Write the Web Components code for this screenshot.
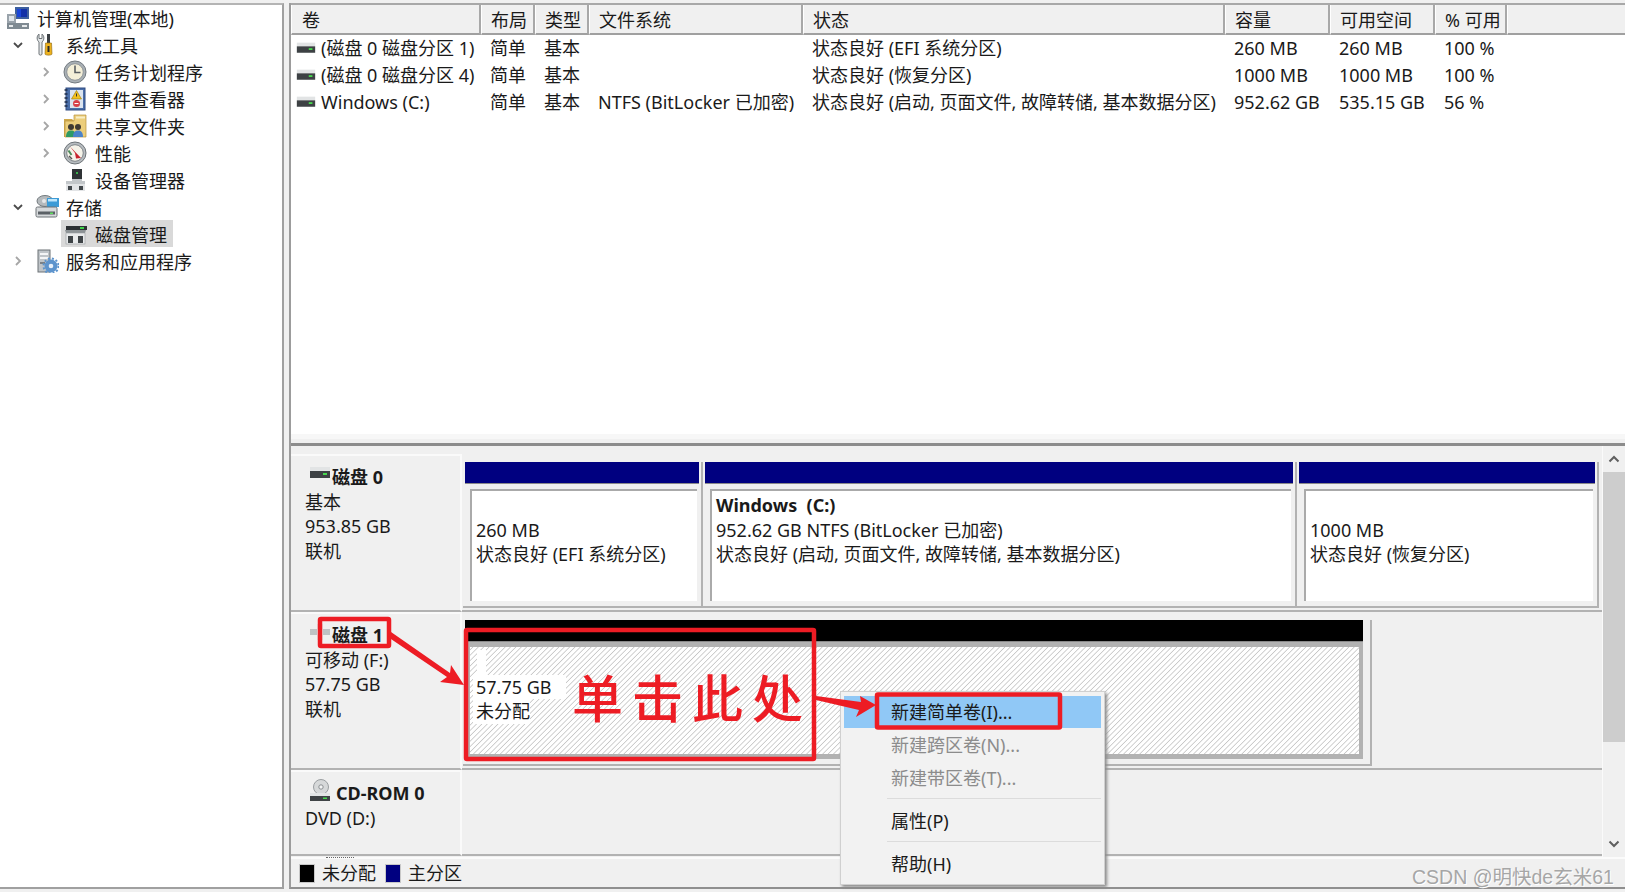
<!DOCTYPE html>
<html lang="zh">
<head>
<meta charset="utf-8">
<title>计算机管理</title>
<style>
html, body { margin: 0; height: 892px; overflow: hidden; background: #f0f0f0; }
body { font: 18px "Noto Sans", "Noto Sans CJK SC", sans-serif; color: #1a1a1a; }
</style>
</head>
<body>
<mmc-shell>
	<tree-pane slot="tree">
		<tree-node level="0" icon="computer">计算机管理(本地)</tree-node>
		<tree-node level="1" toggle="open" icon="tools">系统工具</tree-node>
		<tree-node level="2" toggle="closed" icon="clock">任务计划程序</tree-node>
		<tree-node level="2" toggle="closed" icon="event">事件查看器</tree-node>
		<tree-node level="2" toggle="closed" icon="share">共享文件夹</tree-node>
		<tree-node level="2" toggle="closed" icon="perf">性能</tree-node>
		<tree-node level="2" icon="device">设备管理器</tree-node>
		<tree-node level="1" toggle="open" icon="storage">存储</tree-node>
		<tree-node level="2" icon="disk" selected>磁盘管理</tree-node>
		<tree-node level="1" toggle="closed" icon="services">服务和应用程序</tree-node>
	</tree-pane>
	<volume-list slot="list"></volume-list>
	<disk-view slot="disks">
		<disk-row icon="drive" name="磁盘 0" style="--row-height:158px">
			<span slot="label">基本</span>
			<span slot="label">953.85 GB</span>
			<span slot="label">联机</span>
			<disk-part width="240"><span>&nbsp;</span><span>260 MB</span><span>状态良好 (EFI 系统分区)</span></disk-part>
			<disk-part width="594"><b>Windows&nbsp; (C:)</b><span>952.62 GB NTFS (BitLocker 已加密)</span><span>状态良好 (启动, 页面文件, 故障转储, 基本数据分区)</span></disk-part>
			<disk-part width="302"><span>&nbsp;</span><span>1000 MB</span><span>状态良好 (恢复分区)</span></disk-part>
		</disk-row>
		<disk-row icon="usb" name="磁盘 1" style="--row-height:158px">
			<span slot="label">可移动 (F:)</span>
			<span slot="label">57.75 GB</span>
			<span slot="label">联机</span>
			<disk-part width="909" free><span class="patch">&nbsp;</span><span class="size">57.75 GB</span><span class="kind">未分配</span></disk-part>
		</disk-row>
		<disk-row icon="cd" name="CD-ROM 0" style="--row-height:86px">
			<span slot="label">DVD (D:)</span>
		</disk-row>
	</disk-view>
	<context-menu slot="over">
		<menu-entry active>新建简单卷(I)...</menu-entry>
		<menu-entry disabled>新建跨区卷(N)...</menu-entry>
		<menu-entry disabled>新建带区卷(T)...</menu-entry>
		<menu-entry separated>属性(P)</menu-entry>
		<menu-entry separated>帮助(H)</menu-entry>
	</context-menu>
	<red-notes slot="over"></red-notes>
</mmc-shell>

<script>
const icons = {
	computer: `<rect x="9" y="1" width="14" height="12" fill="#3d5f9e"/><rect x="11" y="3" width="10" height="8" fill="#1b46d8"/><rect x="15" y="3" width="6" height="8" fill="#1230a8"/>
		<rect x="1" y="8" width="9" height="9" fill="#9aa3ab"/><rect x="3" y="10" width="5" height="5" fill="#dfe5ea"/><path d="M1 17h22v6H1z" fill="#7f8a92"/><path d="M3 19h4v2H3zM16 19h5v2h-5z" fill="#e6e9eb"/>`,
	tools: `<path d="M4 1C1.500 3 1.500 7 4 9v12c0 1.500 3 1.500 3 0V9c2.500-2 2.500-6 0-8v4.500H4z" fill="#e4e7e8" stroke="#6e7478"/>
		<rect x="12" y="1" width="3" height="9" fill="#3b3f43"/><path d="M10.500 10h6l.5 11c0 1.500-7 1.500-7 0z" fill="#eeb21d" stroke="#8a6510" stroke-width=".6"/><rect x="12.500" y="13" width="2" height="6" fill="#2b2b2b"/>`,
	clock: `<circle cx="12" cy="12" r="11" fill="#a9b0b5" stroke="#737a80"/><circle cx="12" cy="12" r="8.300" fill="#f4efd8" stroke="#8e9499"/><path d="M12 5.500V12.500H17.500" fill="none" stroke="#5a5f63" stroke-width="1.600"/>`,
	event: `<rect x="3" y="1" width="19" height="22" fill="#4a6ea9" stroke="#2e4a80"/><rect x="7" y="3" width="13" height="18" fill="#dbe4ef"/><path d="M1.500 3h3M1.500 7h3M1.500 11h3M1.500 15h3M1.500 19h3" stroke="#1e2d4a" stroke-width="1.500"/>
		<path d="M13.500 3.500l5 8.500h-10z" fill="#f3c11c" stroke="#99780c" stroke-width=".6"/><rect x="13" y="6.500" width="1" height="3" fill="#333"/><circle cx="13.500" cy="16.500" r="3.500" fill="#d8404a"/><rect x="11.500" y="16" width="4" height="1" fill="#fff"/>`,
	share: `<path d="M1 5h8l2 2h-1v16H1z" fill="#d0a94c"/><path d="M11 1h12v22H2V7h9z" fill="#ecce7c" stroke="#b9923c" stroke-width=".7"/><rect x="13" y="2.500" width="9" height="2" fill="#f8eec6"/>
		<circle cx="8" cy="13" r="3" fill="#3f3a33"/><circle cx="15" cy="13" r="3" fill="#3f3a33"/><path d="M3 23c0-5 2-6.500 5-6.500s5 1.500 5 6.500z" fill="#2f9a63"/><path d="M10 23c0-5 2-6.500 5-6.500s5 1.500 5 6.500z" fill="#4b83c9"/>`,
	perf: `<circle cx="12" cy="12" r="11" fill="#b7bcc0" stroke="#6d7377"/><circle cx="12" cy="12" r="8.300" fill="#f5f3e9" stroke="#7f858a"/><path d="M7 5.500l11 11.500-5 .5-1-5.500z" fill="#c8232c"/><path d="M5.500 9.500l3 4.500" stroke="#4d8a5a" stroke-width="2"/><path d="M6 15l3 3" stroke="#555" stroke-width="1.500"/>`,
	device: `<rect x="9" y="1" width="10" height="12" fill="#2e3235"/><rect x="13" y="4" width="2" height="2" fill="#38b04a"/><path d="M3 13h6v-2h10v2h3v10H3z" fill="#c2c6c9"/><path d="M3 16h19v7H3z" fill="#e2e4e6"/><path d="M5 18h4v4H5zM16 18h4v4h-4z" fill="#42474b"/>`,
	storage: `<ellipse cx="10" cy="6" rx="8" ry="5.500" fill="#b5babd" stroke="#737a7e"/><circle cx="9" cy="6" r="2" fill="#e6e8e9"/><rect x="12" y="3" width="12" height="9" fill="#3c9bd6"/><rect x="13" y="4" width="9" height="2.500" fill="#bfe6fb"/>
		<rect x="1" y="12" width="21" height="10" rx="1.500" fill="#d6d9db" stroke="#6d7377"/><rect x="3" y="16.500" width="17" height="3" fill="#5b6166"/><rect x="15" y="17.500" width="3" height="1.500" fill="#5fe05f"/>`,
	disk: `<rect x="3" y="4" width="21" height="4" fill="#2c3033"/><rect x="17" y="5" width="4" height="2" fill="#3fd04a"/><path d="M2 8h21l-1 3H3z" fill="#8d9396"/><rect x="3" y="11" width="19" height="11" fill="#e8eaeb" stroke="#9a9ea1" stroke-width=".6"/><path d="M5 14h5v7H5zM15 14h5v7h-5z" fill="#3f4447"/>`,
	services: `<rect x="3" y="1" width="12" height="22" fill="#bfc4c8" stroke="#6d7377"/><path d="M5 4h8v2H5zM5 8h8v2H5z" fill="#f4f5f6"/><rect x="5" y="13" width="5" height="2" fill="#7a8085"/>
		<circle cx="16" cy="17" r="6.500" fill="#5d94cd"/><circle cx="16" cy="17" r="7.500" fill="none" stroke="#5d94cd" stroke-width="2" stroke-dasharray="2 2"/><circle cx="16" cy="17" r="2.300" fill="#e9f1fa"/>`,
	drive: `<rect x="2" y="4" width="20" height="4" fill="#e2e4e5"/><rect x="2" y="8" width="20" height="7" fill="#3d4144"/><rect x="15" y="10" width="4" height="2" fill="#47d84e"/>`,
	usb: `<rect x="2" y="8" width="20" height="6" fill="#bfc2c4"/><rect x="9" y="3" width="6" height="16" fill="#e3e4e5"/>`,
	cd: `<circle cx="13" cy="8" r="7.500" fill="#d6d8d9" stroke="#9a9ea1"/><circle cx="13" cy="8" r="2.200" fill="#f3f4f4" stroke="#8a8e91"/><rect x="2" y="14" width="20" height="3" fill="#e3e5e6"/><rect x="2" y="17" width="20" height="5" fill="#3f4346"/><rect x="15" y="18.500" width="4" height="1.500" fill="#47d84e"/>`
};

const chevrons = {
	open: '<path d="M3 5l4 4 4-4" fill="none" stroke="#4a4a4a" stroke-width="1.800"/>',
	closed: '<path d="M5 3l4 4-4 4" fill="none" stroke="#a6a6a6" stroke-width="1.800"/>'
};

function iconSvg(name, size) {
	return `<svg width="${size}" height="${size}" viewBox="0 0 24 24" aria-hidden="true">${icons[name] || ''}</svg>`;
}

class BaseElement extends HTMLElement {
	connectedCallback() {
		if (!this.shadowRoot) {
			this.attachShadow({ mode: 'open' }).innerHTML = this.render();
		}
	}
}

class MmcShell extends BaseElement {
	render() {
		return `<style>
			:host { display: grid; grid-template-columns: 285px 1fr; width: 1625px; height: 892px; position: relative; overflow: hidden; padding-top: 3px; box-sizing: border-box; }
			.left { height: 886px; background: #fff; border-top: 2px solid #b4b4b4; border-right: 2px solid #a0a0a0; border-bottom: 2px solid #a0a0a0; box-sizing: border-box; width: 284px; }
			.right { margin-left: 4px; height: 884px; border-left: 2px solid #9c9c9c; border-bottom: 2px solid #8f8f8f; display: flex; flex-direction: column; }
			.list { height: 431px; background: #fff; border-top: 2px solid #a8a8a8; box-sizing: border-box; }
			.split { height: 12px; border-bottom: 3px solid #8c8c8c; box-sizing: border-box; background: linear-gradient(#f7f7f7 0 5px, #f0f0f0 5px); }
			.disks { flex: 1; min-height: 0; }
			.mark { position: absolute; left: 1412px; top: 861px; font: 19.500px "Liberation Sans", "Noto Sans CJK SC", sans-serif; color: #a6a6a6; text-shadow: 1px 1px 0 #fff; white-space: nowrap; }
		</style>
		<div class="left"><slot name="tree"></slot></div>
		<div class="right">
			<div class="list"><slot name="list"></slot></div>
			<div class="split"></div>
			<div class="disks"><slot name="disks"></slot></div>
		</div>
		<slot name="over"></slot>
		<div class="mark">CSDN @明快de玄米61</div>`;
	}
}

class TreePane extends BaseElement {
	render() {
		return `<style>:host { display: block; margin-top: -1px; }</style><slot></slot>`;
	}
}

class TreeNode extends BaseElement {
	render() {
		const level = Number(this.getAttribute('level'));
		const toggle = this.getAttribute('toggle');
		const left = level === 0 ? 6 : 4 + (level - 1) * 28;
		return `<style>
			:host { display: flex; align-items: center; height: 27px; padding-left: ${left}px; white-space: nowrap; }
			.tog { width: 28px; height: 14px; display: flex; justify-content: center; flex: none; }
			.item { display: flex; align-items: center; height: 27px; gap: ${level === 2 ? 8 : 7}px; padding: 0 6px 0 ${level === 0 ? 0 : level === 2 ? 2 : 3}px; margin-left: ${level === 2 ? 1 : 0}px; }
			:host([selected]) .item { background: #d9d9d9; }
			svg { display: block; flex: none; }
		</style>
		${level > 0 ? `<span class="tog">${toggle ? `<svg width="14" height="14" viewBox="0 0 14 14">${chevrons[toggle]}</svg>` : ''}</span>` : ''}
		<span class="item">${iconSvg(this.getAttribute('icon'), 24)}<slot></slot></span>`;
	}
}

const columns = [
	['卷', 190], ['布局', 54], ['类型', 54], ['文件系统', 214], ['状态', 422], ['容量', 105], ['可用空间', 105], ['% 可用', 72]
];
const volumes = [
	['(磁盘 0 磁盘分区 1)', '简单', '基本', '', '状态良好 (EFI 系统分区)', '260 MB', '260 MB', '100 %'],
	['(磁盘 0 磁盘分区 4)', '简单', '基本', '', '状态良好 (恢复分区)', '1000 MB', '1000 MB', '100 %'],
	['Windows (C:)', '简单', '基本', 'NTFS (BitLocker 已加密)', '状态良好 (启动, 页面文件, 故障转储, 基本数据分区)', '952.62 GB', '535.15 GB', '56 %']
];

class VolumeList extends BaseElement {
	render() {
		const grid = columns.map((c) => c[1] + 'px').join(' ') + ' 1fr';
		const head = columns.map((c) => `<div class="th">${c[0]}</div>`).join('') + '<div class="th last"></div>';
		const rows = volumes.map((row) => row.map((text, i) => `<div class="td ${i === 0 ? 'first' : ''}">${i === 0 ? iconSvg('drive', 22) : ''}<span>${text}</span></div>`).join('') + '<div></div>').join('');
		return `<style>
			:host { display: block; }
			.grid { display: grid; grid-template-columns: ${grid}; }
			.th { height: 30px; line-height: 31px; padding-left: 9px; box-sizing: border-box; background: #f0f0f0; border-right: 2px solid #a8a8a8; border-left: 1px solid #fff; border-bottom: 2px solid #a0a0a0; white-space: nowrap; }
			.th:first-child { padding-left: 10px; }
			.th.last { border-right: 0; }
			.td { height: 27px; line-height: 27px; padding-left: 9px; white-space: nowrap; }
			.td.first { padding-left: 4px; display: flex; align-items: center; gap: 4px; }
			svg { display: block; flex: none; margin-top: 2px; }
		</style>
		<div class="grid">${head}${rows}</div>`;
	}
}

class DiskView extends BaseElement {
	render() {
		return `<style>
			:host { display: grid; grid-template-columns: 1fr 23px; grid-template-rows: 1fr 30px; height: 100%; }
			.rows { overflow: hidden; padding-top: 8px; min-height: 0; }
			.bar { display: flex; flex-direction: column; align-items: center; background: #f0f0f0; border-left: 1px solid #fafafa; }
			.btn { height: 26px; flex: none; display: flex; align-items: center; justify-content: center; }
			.thumb { height: 270px; width: 100%; background: #cdcdcd; flex: none; }
			.track { flex: 1; }
			.legend { grid-column: 1 / 3; display: flex; align-items: center; background: #f0f0f0; border-top: 2px solid #fbfbfb; padding: 0 0 2px 8px; box-sizing: border-box; position: relative; }
			.legend i { width: 16px; height: 19px; border: 1px solid #c8c8c8; box-sizing: border-box; margin-right: 7px; margin-top: 2px; }
			.legend span { margin-right: 9px; }
			.clip { position: absolute; left: 35px; top: -2px; width: 28px; border-top: 1px dotted #666; }
		</style>
		<div class="rows"><slot></slot></div>
		<div class="bar">
			<div class="btn"><svg width="14" height="10" viewBox="0 0 14 10"><path d="M2.500 7.500L7 3l4.500 4.500" fill="none" stroke="#5f5f5f" stroke-width="2"/></svg></div>
			<div class="thumb"></div>
			<div class="track"></div>
			<div class="btn"><svg width="14" height="10" viewBox="0 0 14 10"><path d="M2.500 2.500L7 7l4.500-4.500" fill="none" stroke="#5f5f5f" stroke-width="2"/></svg></div>
		</div>
		<div class="legend"><div class="clip"></div><i style="background:#000"></i><span>未分配</span><i style="background:#000080"></i><span>主分区</span></div>`;
	}
}

class DiskRow extends BaseElement {
	render() {
		const gap = this.getAttribute('icon') === 'cd' ? 4 : 0;
		return `<style>
			:host { display: grid; grid-template-columns: 171px 1fr; height: var(--row-height); overflow: hidden; }
			.label { border-top: 2px solid #fafafa; border-right: 2px solid #fafafa; border-bottom: 2px solid #b2b2b2; padding: 9px 0 0 14px; box-sizing: border-box; display: flex; flex-direction: column; line-height: 24.500px; overflow: hidden; }
			.name { display: flex; align-items: center; font-weight: 700; gap: ${gap}px; height: 24.500px; margin-left: 3px; }
			.name svg { flex: none; margin-top: -5px; }
			.parts { display: flex; align-items: flex-start; padding: 8px 0 0 1px; border-bottom: 2px solid #b2b2b2; box-sizing: border-box; }
			::slotted(span) { display: block; }
		</style>
		<div class="label">
			<div class="name">${iconSvg(this.getAttribute('icon'), 24)}<span>${this.getAttribute('name')}</span></div>
			<slot name="label"></slot>
		</div>
		<div class="parts"><slot></slot></div>`;
	}
}

class DiskPart extends BaseElement {
	render() {
		const free = this.hasAttribute('free');
		return `<style>
			:host { display: block; flex: none; width: ${this.getAttribute('width')}px; box-sizing: border-box; border-right: 2px solid #b2b2b2; border-bottom: 2px solid #b2b2b2; padding: 0 ${free ? 5 : 0}px 5px 2px; }
			.top { height: 22px; margin-right: 2px; background: ${free ? '#000' : '#000080'}; border-bottom: 1px solid #8a8a8a; box-sizing: border-box; }
			.frame { margin: 5px 4px 0 5px; height: 108px; background: #fff; border-top: 2px solid #aaa; border-left: 2px solid #aaa; padding: 2px 0 0 4px; line-height: 24.500px; overflow: hidden; white-space: nowrap; }
			.frame.free { margin: 0; height: 104px; background: repeating-linear-gradient(-45deg, #fff 0, #fff 2.200px, #c6c6c6 3px, #fff 3.800px); border: 0; padding: 3px 0 0 3px; }
			.wrap { background: #b2b2b2; padding: 5px 4px 5px 5px; margin-right: 2px; }
			::slotted(*) { display: block; }
			::slotted(b) { font-weight: 700; }
			::slotted(.patch) { width: 9px; margin-left: 4px; background: #fff; overflow: hidden; }
			::slotted(.size) { width: fit-content; background: #fff; padding: 0 14px 0 3px; }
			::slotted(.kind) { width: fit-content; background: #fff; padding: 0 0 0 3px; }
		</style>
		<div class="top"></div>
		${free ? '<div class="wrap"><div class="frame free"><slot></slot></div></div>' : '<div class="frame"><slot></slot></div>'}`;
	}
}

class ContextMenu extends BaseElement {
	render() {
		return `<style>
			:host { position: absolute; left: 840px; top: 691px; width: 265px; height: 194px; box-sizing: border-box; padding: 4px 3px; background: #f2f2f2; border: 1px solid #d0d0d0; box-shadow: 2px 2px 3px #8a8a8a; z-index: 2; }
		</style><slot></slot>`;
	}
}

class MenuEntry extends BaseElement {
	render() {
		return `<style>
			:host { display: block; height: 33px; line-height: 33px; padding-left: 47px; white-space: nowrap; position: relative; }
			:host([active]) { background: #90c8f6; height: 32px; margin-bottom: 1px; line-height: 32px; }
			:host([disabled]) { color: #8c8c8c; }
			:host([separated]) { margin-top: 10px; }
			:host([separated])::before { content: ""; position: absolute; left: 43px; right: 0; top: -7px; border-top: 1px solid #dcdcdc; }
		</style><slot></slot>`;
	}
}

class RedNotes extends BaseElement {
	render() {
		return `<style>
			:host { position: absolute; inset: 0; z-index: 3; pointer-events: none; }
			svg { position: absolute; inset: 0; }
			.say { position: absolute; left: 572px; top: 660px; font: 500 51px/72px "Noto Sans CJK SC", sans-serif; letter-spacing: 9px; color: #ed1c24; white-space: nowrap; }
		</style>
		<svg width="1625" height="892" viewBox="0 0 1625 892" fill="#ed1c24">
			<g fill="none" stroke="#ed1c24" stroke-width="4.500">
				<rect x="320" y="619" width="69" height="27" rx="1"/>
				<rect x="466" y="630" width="348" height="129" rx="1"/>
				<rect x="877" y="694.500" width="183" height="33" rx="1"/>
			</g>
			<path d="M391 632L450 673 451 665 464 685 440 682 447 677 388 637z"/>
			<path d="M816 696l45 6-1-6 16 9-20 12 3-7-43-10z"/>
		</svg>
		<div class="say">单击此处</div>`;
	}
}

window.customElements.define('mmc-shell', MmcShell);
window.customElements.define('tree-pane', TreePane);
window.customElements.define('tree-node', TreeNode);
window.customElements.define('volume-list', VolumeList);
window.customElements.define('disk-view', DiskView);
window.customElements.define('disk-row', DiskRow);
window.customElements.define('disk-part', DiskPart);
window.customElements.define('context-menu', ContextMenu);
window.customElements.define('menu-entry', MenuEntry);
window.customElements.define('red-notes', RedNotes);
</script>
</body>
</html>
